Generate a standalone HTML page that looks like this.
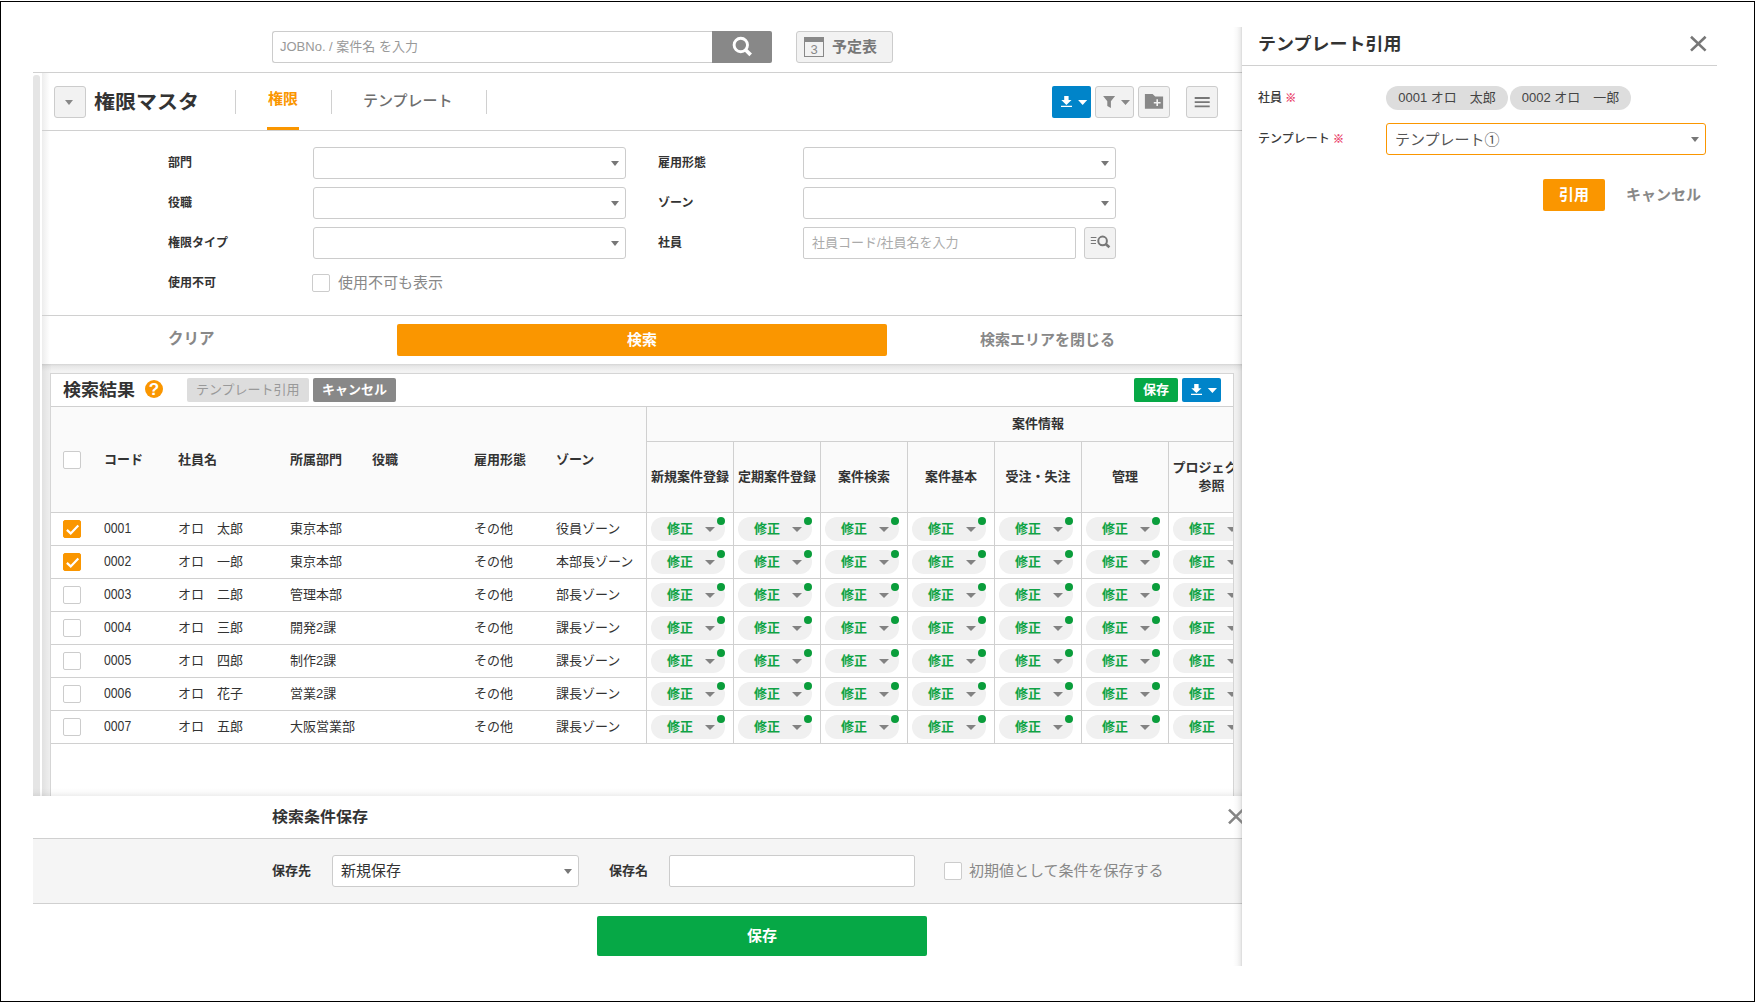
<!DOCTYPE html>
<html lang="ja">
<head>
<meta charset="utf-8">
<title>権限マスタ</title>
<style>
*{box-sizing:border-box;margin:0;padding:0}
html,body{width:1758px;height:1005px;background:#fff;overflow:hidden}
body{position:relative;font-family:"Liberation Sans","Noto Sans CJK JP",sans-serif;font-size:13px;color:#333;line-height:1}
.a{position:absolute}
.t{position:absolute;white-space:nowrap;line-height:1}
.b{font-weight:bold}
.frame{left:0;top:1px;width:1755px;height:1001px;border:1px solid #000}
.hl{position:absolute;height:1px;background:#d0d0d0}
.vl{position:absolute;width:1px;background:#d0d0d0}
.btn{position:absolute;border:1px solid #ccc;background:#f2f2f2;border-radius:3px}
.sel{position:absolute;border:1px solid #ccc;background:#fff;border-radius:3px}
.sel:after{content:"";position:absolute;right:6px;top:13px;border:4px solid transparent;border-top:5px solid #777;border-bottom:0}
.lbl{position:absolute;font-size:12px;font-weight:bold;color:#333;white-space:nowrap;line-height:1}
.cb{position:absolute;width:18px;height:18px;border:1px solid #ccc;background:#fff;border-radius:2px}
.cb.on{background:#fa9600;border-color:#fa9600}
.pill{position:absolute;width:74px;height:24px;border-radius:12px;background:#f0f0f0}
.pill span{position:absolute;left:16px;top:5px;font-size:13px;font-weight:bold;color:#0fa345;line-height:1;white-space:nowrap}
.pill i{position:absolute;left:53.5px;top:10px;border:5px solid transparent;border-top:5.5px solid #828282;border-bottom:0}
.pill b{position:absolute;left:66px;top:0;width:8px;height:8px;border-radius:4px;background:#0a9d3b}
.chip{height:24px;border-radius:12px;background:#ddd;font-size:13px;color:#444;line-height:24px;text-align:center;white-space:nowrap}
.rq{color:#ea3a66;font-weight:bold;font-size:11px;-webkit-text-stroke:.25px #ea3a66}
</style>
</head>
<body>
<div class="a frame"></div>

<!-- top search -->
<div id="top">
  <div class="a" style="left:272px;top:31px;width:441px;height:32px;border:1px solid #ccc;border-right:0;border-radius:3px 0 0 3px;background:#fff"></div>
  <div class="t" style="left:280px;top:40px;font-size:13px;color:#999">JOBNo. / 案件名 を入力</div>
  <div class="a" style="left:712px;top:31px;width:60px;height:32px;background:#888;border-radius:0 2px 2px 0"></div>
  <svg class="a" style="left:730px;top:35px" width="24" height="24" viewBox="0 0 24 24"><circle cx="10.8" cy="10" r="6.7" fill="none" stroke="#fff" stroke-width="2.9"/><path d="M15.4 14.7 L20.7 19.9" stroke="#fff" stroke-width="3.7" stroke-linecap="butt"/></svg>
  <div class="btn" style="left:796px;top:31px;width:97px;height:32px"></div>
  <div class="a" style="left:804px;top:37px;width:20px;height:20px;border:1px solid #888;border-top:5px solid #888"></div>
  <div class="t" style="left:804px;top:42.5px;width:20px;text-align:center;font-size:13px;color:#888">3</div>
  <div class="t b" style="left:832px;top:39px;font-size:15px;color:#777">予定表</div>
</div>
<div class="hl" style="left:33px;top:72px;width:1209px"></div>

<!-- left strip -->
<div class="a" style="left:33px;top:75px;width:7px;height:721px;background:#e5e5e5;border-radius:3px 3px 0 0"></div>

<!-- main panel -->
<div id="main" class="a" style="left:42px;top:73px;width:1200px;height:724px;background:linear-gradient(to right,#ededed 0,#fff 8px)"></div>

<!-- title row -->
<div class="btn" style="left:54px;top:86px;width:32px;height:32px"></div>
<div class="a" style="left:65px;top:100px;border:4.5px solid transparent;border-top:5px solid #888;border-bottom:0"></div>
<div class="t b" style="left:94px;top:91px;font-size:21px;transform:scaleY(.94);transform-origin:0 100%;color:#333">権限マスタ</div>
<div class="vl" style="left:235px;top:90px;height:24px"></div>
<div class="t b" style="left:268px;top:91px;font-size:15px;color:#fa9600">権限</div>
<div class="a" style="left:267px;top:127px;width:32px;height:3px;background:#fa9600"></div>
<div class="vl" style="left:331px;top:90px;height:24px"></div>
<div class="t" style="left:363px;top:93px;font-size:15px;font-weight:500;color:#6e6e6e">テンプレート</div>
<div class="vl" style="left:486px;top:90px;height:24px"></div>

<div class="a" style="left:1052px;top:86px;width:39px;height:32px;background:#0084c9;border-radius:2px"></div>
<svg class="a" style="left:1052px;top:86px" width="39" height="32" viewBox="0 0 39 32"><path d="M12.2 10.1h4.4v4h2.9l-5.1 4.8-5.1-4.8h2.9z M9 19.8h11v1.2H9z M26.1 14.1h9.1l-4.55 5z" fill="#fff"/></svg>
<div class="btn" style="left:1095px;top:86px;width:39px;height:32px"></div>
<svg class="a" style="left:1095px;top:86px" width="39" height="32" viewBox="0 0 39 32"><path d="M8.1 10.1h12l-4.2 5.2v6.6l-3.6-2v-4.6z M26 14.1h9l-4.5 5z" fill="#888"/></svg>
<div class="btn" style="left:1138px;top:86px;width:32px;height:32px"></div>
<svg class="a" style="left:1138px;top:86px" width="32" height="32" viewBox="0 0 32 32"><path d="M6.9 8h7.7l2.6 2.5h7.9v12.3H6.9z" fill="#888"/><path d="M19.2 13.3v6.8 M15.8 16.7h6.8" stroke="#f2f2f2" stroke-width="1.6" fill="none"/></svg>
<div class="btn" style="left:1186px;top:86px;width:32px;height:32px"></div>
<svg class="a" style="left:1186px;top:86px" width="32" height="32" viewBox="0 0 32 32"><path d="M8.7 11h15v1.9h-15z M8.7 15.2h15v1.9h-15z M8.7 19.4h15v1.9h-15z" fill="#777"/></svg>
<div class="hl" style="left:42px;top:130px;width:1200px"></div>

<!-- form -->
<div id="form">
  <div class="lbl" style="left:168px;top:157px">部門</div>
  <div class="lbl" style="left:168px;top:197px">役職</div>
  <div class="lbl" style="left:168px;top:237px">権限タイプ</div>
  <div class="lbl" style="left:168px;top:277px">使用不可</div>
  <div class="sel" style="left:313px;top:147px;width:313px;height:32px"></div>
  <div class="sel" style="left:313px;top:187px;width:313px;height:32px"></div>
  <div class="sel" style="left:313px;top:227px;width:313px;height:32px"></div>
  <div class="cb" style="left:312px;top:274px"></div>
  <div class="t" style="left:338px;top:275px;font-size:15px;color:#888">使用不可も表示</div>
  <div class="lbl" style="left:658px;top:157px">雇用形態</div>
  <div class="lbl" style="left:658px;top:197px">ゾーン</div>
  <div class="lbl" style="left:658px;top:237px">社員</div>
  <div class="sel" style="left:803px;top:147px;width:313px;height:32px"></div>
  <div class="sel" style="left:803px;top:187px;width:313px;height:32px"></div>
  <div class="a" style="left:803px;top:227px;width:273px;height:32px;border:1px solid #ccc;border-radius:2px;background:#fff"></div>
  <div class="t" style="left:812px;top:236px;font-size:13px;color:#aaa">社員コード/社員名を入力</div>
  <div class="btn" style="left:1084px;top:227px;width:32px;height:32px"></div>
  <svg class="a" style="left:1084px;top:227px" width="32" height="32" viewBox="0 0 32 32"><path d="M6.8 10.45h5.6 M6.8 13.45h5.2 M6.8 16.5h5.2" stroke="#777" stroke-width="1.1" fill="none"/><circle cx="18.6" cy="13.9" r="4.3" fill="none" stroke="#777" stroke-width="2"/><path d="M21.4 16.7 L25.4 20.2" stroke="#777" stroke-width="2.6" fill="none"/></svg>
</div>
<div class="hl" style="left:42px;top:315px;width:1200px"></div>
<div class="t b" style="left:168px;top:331px;font-size:15.5px;color:#888">クリア</div>
<div class="a" style="left:397px;top:324px;width:490px;height:32px;background:#fa9600;border-radius:2px"></div>
<div class="t b" style="left:627px;top:332px;font-size:15px;color:#fff">検索</div>
<div class="t b" style="left:980px;top:332px;font-size:15px;color:#888">検索エリアを閉じる</div>
<div class="a" style="left:42px;top:364px;width:1200px;height:432px;background:#f3f3f3"></div>
<div class="a" style="left:42px;top:364px;width:1200px;height:7px;background:linear-gradient(#d4d4d4,#e6e6e6 2px,#f3f3f3)"></div>
<div class="a" style="left:42px;top:364px;width:9px;height:432px;background:linear-gradient(to right,rgba(0,0,0,.075),rgba(0,0,0,.01))"></div>

<!-- results -->
<div id="res" class="a" style="left:50px;top:373px;width:1184px;height:424px;border:1px solid #d5d5d5;border-bottom:0;background:#fff;overflow:hidden">
<div class="a" id="resin" style="left:-51px;top:-374px;width:1400px;height:800px">
<div class="t b" style="left:63px;top:381px;font-size:18px;transform:scaleY(.94);transform-origin:0 100%;color:#333">検索結果</div>
<div class="a" style="left:145px;top:380px;width:18px;height:18px;border-radius:9px;background:#fa9600"></div>
<div class="t b" style="left:145px;top:381px;width:18px;text-align:center;font-size:17px;color:#fff">?</div>
<div class="a" style="left:187px;top:378px;width:122px;height:24px;background:#ddd;border-radius:2px"></div>
<div class="t" style="left:196px;top:383px;font-size:13px;color:#999">テンプレート引用</div>
<div class="a" style="left:313px;top:378px;width:83px;height:24px;background:#888;border-radius:2px"></div>
<div class="t b" style="left:322px;top:383px;font-size:13px;color:#fff">キャンセル</div>
<div class="a" style="left:1134px;top:378px;width:44px;height:24px;background:#06a846;border-radius:2px"></div>
<div class="t b" style="left:1143px;top:383px;font-size:13px;color:#fff">保存</div>
<div class="a" style="left:1182px;top:378px;width:39px;height:24px;background:#0084c9;border-radius:2px"></div>
<svg class="a" style="left:1182px;top:378px" width="39" height="24" viewBox="0 0 39 24"><path d="M12.2 6.1h4.4v4.1h2.9l-5.1 4.8-5.1-4.8h2.9z M9 15.8h11v1.2H9z M25.8 10.1h9.2l-4.6 5z" fill="#fff"/></svg>
<div class="a" style="left:51px;top:406px;width:1182px;height:107px;background:#fafafa"></div>
<div class="hl" style="left:51px;top:406px;width:1182px"></div>
<div class="hl" style="left:646px;top:441px;width:587px"></div>
<div class="hl" style="left:51px;top:512px;width:1182px"></div>
<div class="cb" style="left:63px;top:451px"></div>
<div class="t b" style="left:104px;top:453px;font-size:13px;color:#333">コード</div>
<div class="t b" style="left:178px;top:453px;font-size:13px;color:#333">社員名</div>
<div class="t b" style="left:290px;top:453px;font-size:13px;color:#333">所属部門</div>
<div class="t b" style="left:372px;top:453px;font-size:13px;color:#333">役職</div>
<div class="t b" style="left:474px;top:453px;font-size:13px;color:#333">雇用形態</div>
<div class="t b" style="left:556px;top:453px;font-size:13px;color:#333">ゾーン</div>
<div class="t b" style="left:1012px;top:417px;font-size:13px;color:#333">案件情報</div>
<div class="t b" style="left:647px;top:470px;width:86px;text-align:center;font-size:13px;color:#333">新規案件登録</div>
<div class="t b" style="left:734px;top:470px;width:86px;text-align:center;font-size:13px;color:#333">定期案件登録</div>
<div class="t b" style="left:821px;top:470px;width:86px;text-align:center;font-size:13px;color:#333">案件検索</div>
<div class="t b" style="left:908px;top:470px;width:86px;text-align:center;font-size:13px;color:#333">案件基本</div>
<div class="t b" style="left:995px;top:470px;width:86px;text-align:center;font-size:13px;color:#333">受注・失注</div>
<div class="t b" style="left:1082px;top:470px;width:86px;text-align:center;font-size:13px;color:#333">管理</div>
<div class="t b" style="left:1172.5px;top:459px;font-size:13px;color:#333;line-height:18px;text-align:center;width:78px;white-space:normal">プロジェクト参照</div>
<div class="vl" style="left:646px;top:406px;height:338px"></div>
<div class="vl" style="left:733px;top:441px;height:303px"></div>
<div class="vl" style="left:820px;top:441px;height:303px"></div>
<div class="vl" style="left:907px;top:441px;height:303px"></div>
<div class="vl" style="left:994px;top:441px;height:303px"></div>
<div class="vl" style="left:1081px;top:441px;height:303px"></div>
<div class="vl" style="left:1168px;top:441px;height:303px"></div>
<div class="hl" style="left:51px;top:545px;width:1182px"></div>
<div class="cb on" style="left:63px;top:520px"><svg class="a" style="left:1px;top:1.6px" width="16" height="14" viewBox="0 0 16 14"><path d="M1.9 6.9 L5.7 10.4 L13.3 2.6" fill="none" stroke="#fff" stroke-width="2.2"/></svg></div>
<div class="t" style="left:104px;top:522px;font-size:13px;color:#333;transform:scale(.94,1.06);transform-origin:0 85%">0001</div>
<div class="t" style="left:178px;top:522px;font-size:13px;color:#333">オロ　太郎</div>
<div class="t" style="left:290px;top:522px;font-size:13px;color:#333">東京本部</div>
<div class="t" style="left:474px;top:522px;font-size:13px;color:#333">その他</div>
<div class="t" style="left:556px;top:522px;font-size:13px;color:#333">役員ゾーン</div>
<div class="pill" style="left:651px;top:517px"><span>修正</span><i></i><b></b></div>
<div class="pill" style="left:738px;top:517px"><span>修正</span><i></i><b></b></div>
<div class="pill" style="left:825px;top:517px"><span>修正</span><i></i><b></b></div>
<div class="pill" style="left:912px;top:517px"><span>修正</span><i></i><b></b></div>
<div class="pill" style="left:999px;top:517px"><span>修正</span><i></i><b></b></div>
<div class="pill" style="left:1086px;top:517px"><span>修正</span><i></i><b></b></div>
<div class="pill" style="left:1173px;top:517px"><span>修正</span><i></i><b></b></div>
<div class="hl" style="left:51px;top:578px;width:1182px"></div>
<div class="cb on" style="left:63px;top:553px"><svg class="a" style="left:1px;top:1.6px" width="16" height="14" viewBox="0 0 16 14"><path d="M1.9 6.9 L5.7 10.4 L13.3 2.6" fill="none" stroke="#fff" stroke-width="2.2"/></svg></div>
<div class="t" style="left:104px;top:555px;font-size:13px;color:#333;transform:scale(.94,1.06);transform-origin:0 85%">0002</div>
<div class="t" style="left:178px;top:555px;font-size:13px;color:#333">オロ　一郎</div>
<div class="t" style="left:290px;top:555px;font-size:13px;color:#333">東京本部</div>
<div class="t" style="left:474px;top:555px;font-size:13px;color:#333">その他</div>
<div class="t" style="left:556px;top:555px;font-size:13px;color:#333">本部長ゾーン</div>
<div class="pill" style="left:651px;top:550px"><span>修正</span><i></i><b></b></div>
<div class="pill" style="left:738px;top:550px"><span>修正</span><i></i><b></b></div>
<div class="pill" style="left:825px;top:550px"><span>修正</span><i></i><b></b></div>
<div class="pill" style="left:912px;top:550px"><span>修正</span><i></i><b></b></div>
<div class="pill" style="left:999px;top:550px"><span>修正</span><i></i><b></b></div>
<div class="pill" style="left:1086px;top:550px"><span>修正</span><i></i><b></b></div>
<div class="pill" style="left:1173px;top:550px"><span>修正</span><i></i><b></b></div>
<div class="hl" style="left:51px;top:611px;width:1182px"></div>
<div class="cb" style="left:63px;top:586px"></div>
<div class="t" style="left:104px;top:588px;font-size:13px;color:#333;transform:scale(.94,1.06);transform-origin:0 85%">0003</div>
<div class="t" style="left:178px;top:588px;font-size:13px;color:#333">オロ　二郎</div>
<div class="t" style="left:290px;top:588px;font-size:13px;color:#333">管理本部</div>
<div class="t" style="left:474px;top:588px;font-size:13px;color:#333">その他</div>
<div class="t" style="left:556px;top:588px;font-size:13px;color:#333">部長ゾーン</div>
<div class="pill" style="left:651px;top:583px"><span>修正</span><i></i><b></b></div>
<div class="pill" style="left:738px;top:583px"><span>修正</span><i></i><b></b></div>
<div class="pill" style="left:825px;top:583px"><span>修正</span><i></i><b></b></div>
<div class="pill" style="left:912px;top:583px"><span>修正</span><i></i><b></b></div>
<div class="pill" style="left:999px;top:583px"><span>修正</span><i></i><b></b></div>
<div class="pill" style="left:1086px;top:583px"><span>修正</span><i></i><b></b></div>
<div class="pill" style="left:1173px;top:583px"><span>修正</span><i></i><b></b></div>
<div class="hl" style="left:51px;top:644px;width:1182px"></div>
<div class="cb" style="left:63px;top:619px"></div>
<div class="t" style="left:104px;top:621px;font-size:13px;color:#333;transform:scale(.94,1.06);transform-origin:0 85%">0004</div>
<div class="t" style="left:178px;top:621px;font-size:13px;color:#333">オロ　三郎</div>
<div class="t" style="left:290px;top:621px;font-size:13px;color:#333">開発2課</div>
<div class="t" style="left:474px;top:621px;font-size:13px;color:#333">その他</div>
<div class="t" style="left:556px;top:621px;font-size:13px;color:#333">課長ゾーン</div>
<div class="pill" style="left:651px;top:616px"><span>修正</span><i></i><b></b></div>
<div class="pill" style="left:738px;top:616px"><span>修正</span><i></i><b></b></div>
<div class="pill" style="left:825px;top:616px"><span>修正</span><i></i><b></b></div>
<div class="pill" style="left:912px;top:616px"><span>修正</span><i></i><b></b></div>
<div class="pill" style="left:999px;top:616px"><span>修正</span><i></i><b></b></div>
<div class="pill" style="left:1086px;top:616px"><span>修正</span><i></i><b></b></div>
<div class="pill" style="left:1173px;top:616px"><span>修正</span><i></i><b></b></div>
<div class="hl" style="left:51px;top:677px;width:1182px"></div>
<div class="cb" style="left:63px;top:652px"></div>
<div class="t" style="left:104px;top:654px;font-size:13px;color:#333;transform:scale(.94,1.06);transform-origin:0 85%">0005</div>
<div class="t" style="left:178px;top:654px;font-size:13px;color:#333">オロ　四郎</div>
<div class="t" style="left:290px;top:654px;font-size:13px;color:#333">制作2課</div>
<div class="t" style="left:474px;top:654px;font-size:13px;color:#333">その他</div>
<div class="t" style="left:556px;top:654px;font-size:13px;color:#333">課長ゾーン</div>
<div class="pill" style="left:651px;top:649px"><span>修正</span><i></i><b></b></div>
<div class="pill" style="left:738px;top:649px"><span>修正</span><i></i><b></b></div>
<div class="pill" style="left:825px;top:649px"><span>修正</span><i></i><b></b></div>
<div class="pill" style="left:912px;top:649px"><span>修正</span><i></i><b></b></div>
<div class="pill" style="left:999px;top:649px"><span>修正</span><i></i><b></b></div>
<div class="pill" style="left:1086px;top:649px"><span>修正</span><i></i><b></b></div>
<div class="pill" style="left:1173px;top:649px"><span>修正</span><i></i><b></b></div>
<div class="hl" style="left:51px;top:710px;width:1182px"></div>
<div class="cb" style="left:63px;top:685px"></div>
<div class="t" style="left:104px;top:687px;font-size:13px;color:#333;transform:scale(.94,1.06);transform-origin:0 85%">0006</div>
<div class="t" style="left:178px;top:687px;font-size:13px;color:#333">オロ　花子</div>
<div class="t" style="left:290px;top:687px;font-size:13px;color:#333">営業2課</div>
<div class="t" style="left:474px;top:687px;font-size:13px;color:#333">その他</div>
<div class="t" style="left:556px;top:687px;font-size:13px;color:#333">課長ゾーン</div>
<div class="pill" style="left:651px;top:682px"><span>修正</span><i></i><b></b></div>
<div class="pill" style="left:738px;top:682px"><span>修正</span><i></i><b></b></div>
<div class="pill" style="left:825px;top:682px"><span>修正</span><i></i><b></b></div>
<div class="pill" style="left:912px;top:682px"><span>修正</span><i></i><b></b></div>
<div class="pill" style="left:999px;top:682px"><span>修正</span><i></i><b></b></div>
<div class="pill" style="left:1086px;top:682px"><span>修正</span><i></i><b></b></div>
<div class="pill" style="left:1173px;top:682px"><span>修正</span><i></i><b></b></div>
<div class="hl" style="left:51px;top:743px;width:1182px"></div>
<div class="cb" style="left:63px;top:718px"></div>
<div class="t" style="left:104px;top:720px;font-size:13px;color:#333;transform:scale(.94,1.06);transform-origin:0 85%">0007</div>
<div class="t" style="left:178px;top:720px;font-size:13px;color:#333">オロ　五郎</div>
<div class="t" style="left:290px;top:720px;font-size:13px;color:#333">大阪営業部</div>
<div class="t" style="left:474px;top:720px;font-size:13px;color:#333">その他</div>
<div class="t" style="left:556px;top:720px;font-size:13px;color:#333">課長ゾーン</div>
<div class="pill" style="left:651px;top:715px"><span>修正</span><i></i><b></b></div>
<div class="pill" style="left:738px;top:715px"><span>修正</span><i></i><b></b></div>
<div class="pill" style="left:825px;top:715px"><span>修正</span><i></i><b></b></div>
<div class="pill" style="left:912px;top:715px"><span>修正</span><i></i><b></b></div>
<div class="pill" style="left:999px;top:715px"><span>修正</span><i></i><b></b></div>
<div class="pill" style="left:1086px;top:715px"><span>修正</span><i></i><b></b></div>
<div class="pill" style="left:1173px;top:715px"><span>修正</span><i></i><b></b></div>
</div></div>

<!-- bottom save panel -->
<div class="a" style="left:33px;top:788px;width:1209px;height:8px;background:linear-gradient(rgba(0,0,0,0),rgba(0,0,0,.02) 50%,rgba(0,0,0,.065))"></div>
<div id="save" class="a" style="left:33px;top:796px;width:1209px;height:170px;background:#fff"></div>
<div class="t b" style="left:272px;top:809px;font-size:16px;transform:scaleY(.94);transform-origin:0 100%;color:#333">検索条件保存</div>
<div class="hl" style="left:33px;top:838px;width:1209px"></div>
<div class="a" style="left:33px;top:839px;width:1209px;height:64px;background:#f5f5f5"></div>
<div class="hl" style="left:33px;top:903px;width:1209px"></div>
<div class="t b" style="left:272px;top:864px;font-size:13px;color:#333">保存先</div>
<div class="sel" style="left:332px;top:855px;width:247px;height:32px"></div>
<div class="t" style="left:341px;top:863px;font-size:15px;color:#333">新規保存</div>
<div class="t b" style="left:609px;top:864px;font-size:13px;color:#333">保存名</div>
<div class="a" style="left:669px;top:855px;width:246px;height:32px;border:1px solid #ccc;border-radius:2px;background:#fff"></div>
<div class="cb" style="left:944px;top:862px"></div>
<div class="t" style="left:969px;top:863px;font-size:15px;color:#888">初期値として条件を保存する</div>
<div class="a" style="left:597px;top:916px;width:330px;height:40px;background:#06a846;border-radius:2px"></div>
<div class="t b" style="left:747px;top:928px;font-size:15px;color:#fff">保存</div>

<!-- right panel -->
<div class="a" style="left:1233px;top:27px;width:9px;height:939px;background:linear-gradient(to right,rgba(0,0,0,0),rgba(0,0,0,.025) 45%,rgba(0,0,0,.07) 80%,rgba(0,0,0,.15))"></div>
<svg class="a" style="left:1227px;top:808px" width="18" height="17" viewBox="0 0 18 17"><path d="M2 1.6 L16 15.4 M16 1.6 L2 15.4" stroke="#848484" stroke-width="2.6"/></svg>
<div id="right" class="a" style="left:1242px;top:27px;width:512px;height:939px;background:#fff"></div>
<div class="t b" style="left:1258px;top:35px;font-size:18px;transform:scaleY(.96);transform-origin:0 100%;color:#333">テンプレート引用</div>
<svg class="a" style="left:1689px;top:35px" width="18" height="17" viewBox="0 0 18 17"><path d="M2 1.8 L16.6 15.6 M16.6 1.8 L2 15.6" stroke="#777" stroke-width="2.6"/></svg>
<div class="hl" style="left:1242px;top:65px;width:475px"></div>
<div class="lbl" style="left:1258px;top:92px;font-weight:500;color:#3a3a3a">社員 <span class="rq">※</span></div>
<div class="a chip" style="left:1386px;top:86px;width:122px">0001 オロ　太郎</div>
<div class="a chip" style="left:1510px;top:86px;width:121px">0002 オロ　一郎</div>
<div class="lbl" style="left:1258px;top:133px;font-weight:500;color:#3a3a3a">テンプレート <span class="rq">※</span></div>
<div class="sel" style="left:1386px;top:123px;width:320px;height:32px;border-color:#fa9600"></div>
<div class="t" style="left:1395px;top:132px;font-size:15px;color:#555">テンプレート①</div>
<div class="a" style="left:1543px;top:179px;width:62px;height:32px;background:#fa9600;border-radius:2px"></div>
<div class="t b" style="left:1559px;top:187px;font-size:15px;color:#fff">引用</div>
<div class="t b" style="left:1626px;top:187px;font-size:15px;color:#888">キャンセル</div>
</body>
</html>
